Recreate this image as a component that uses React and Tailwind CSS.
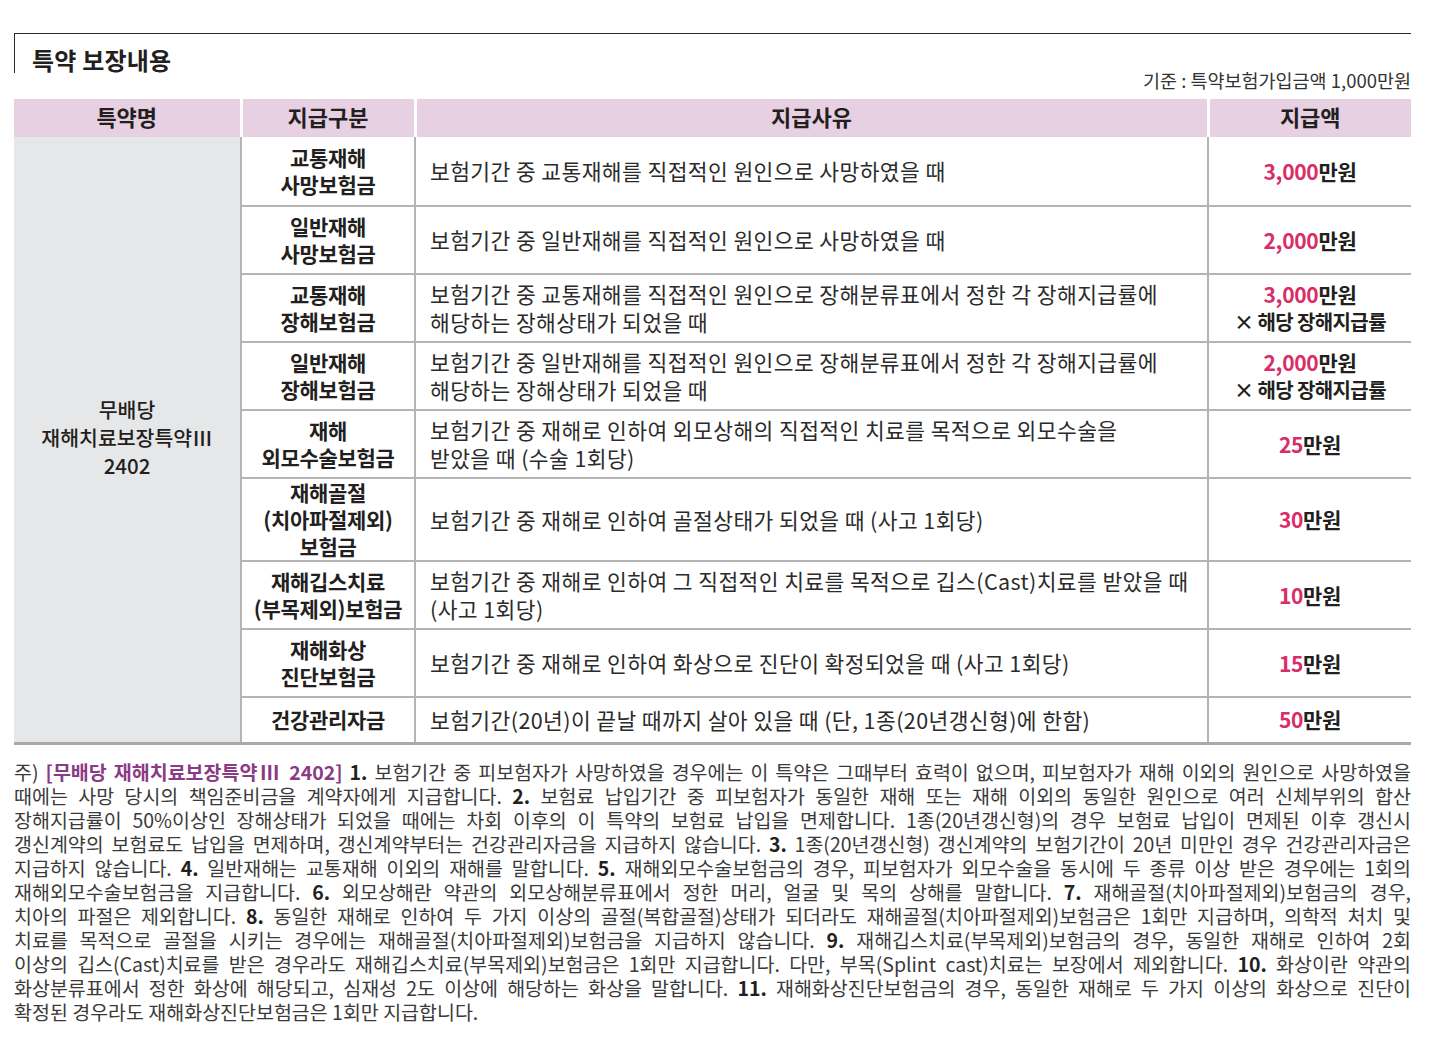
import React from 'react';

const rows = [
  { name: ['교통재해', '사망보험금'], reason: ['보험기간 중 교통재해를 직접적인 원인으로 사망하였을 때'], amt: '3,000', rate: false, h: 'h-[69px]' },
  { name: ['일반재해', '사망보험금'], reason: ['보험기간 중 일반재해를 직접적인 원인으로 사망하였을 때'], amt: '2,000', rate: false, h: 'h-[68px]' },
  { name: ['교통재해', '장해보험금'], reason: ['보험기간 중 교통재해를 직접적인 원인으로 장해분류표에서 정한 각 장해지급률에', '해당하는 장해상태가 되었을 때'], amt: '3,000', rate: true, h: 'h-[68px]' },
  { name: ['일반재해', '장해보험금'], reason: ['보험기간 중 일반재해를 직접적인 원인으로 장해분류표에서 정한 각 장해지급률에', '해당하는 장해상태가 되었을 때'], amt: '2,000', rate: true, h: 'h-[68px]' },
  { name: ['재해', '외모수술보험금'], reason: ['보험기간 중 재해로 인하여 외모상해의 직접적인 치료를 목적으로 외모수술을', '받았을 때 (수술 1회당)'], amt: '25', rate: false, h: 'h-[68px]' },
  { name: ['재해골절', '(치아파절제외)', '보험금'], reason: ['보험기간 중 재해로 인하여 골절상태가 되었을 때 (사고 1회당)'], amt: '30', rate: false, h: 'h-[83px]' },
  { name: ['재해깁스치료', '(부목제외)보험금'], reason: ['보험기간 중 재해로 인하여 그 직접적인 치료를 목적으로 깁스(Cast)치료를 받았을 때', '(사고 1회당)'], amt: '10', rate: false, h: 'h-[68px]' },
  { name: ['재해화상', '진단보험금'], reason: ['보험기간 중 재해로 인하여 화상으로 진단이 확정되었을 때 (사고 1회당)'], amt: '15', rate: false, h: 'h-[68px]' },
  { name: ['건강관리자금'], reason: ['보험기간(20년)이 끝날 때까지 살아 있을 때 (단, 1종(20년갱신형)에 한함)'], amt: '50', rate: false, h: 'h-[46px]' },
];

// 각주: 줄바꿈 위치를 원본에 맞춰 한 줄씩 양쪽정렬
const notes = [
  [['p', '[무배당 재해치료보장특약Ⅲ 2402]'], ' ', ['b', '1.'], ' 보험기간 중 피보험자가 사망하였을 경우에는 이 특약은 그때부터 효력이 없으며, 피보험자가 재해 이외의 원인으로 사망하였을'],
  ['때에는 사망 당시의 책임준비금을 계약자에게 지급합니다. ', ['b', '2.'], ' 보험료 납입기간 중 피보험자가 동일한 재해 또는 재해 이외의 동일한 원인으로 여러 신체부위의 합산'],
  ['장해지급률이 50%이상인 장해상태가 되었을 때에는 차회 이후의 이 특약의 보험료 납입을 면제합니다. 1종(20년갱신형)의 경우 보험료 납입이 면제된 이후 갱신시'],
  ['갱신계약의 보험료도 납입을 면제하며, 갱신계약부터는 건강관리자금을 지급하지 않습니다. ', ['b', '3.'], ' 1종(20년갱신형) 갱신계약의 보험기간이 20년 미만인 경우 건강관리자금은'],
  ['지급하지 않습니다. ', ['b', '4.'], ' 일반재해는 교통재해 이외의 재해를 말합니다. ', ['b', '5.'], ' 재해외모수술보험금의 경우, 피보험자가 외모수술을 동시에 두 종류 이상 받은 경우에는 1회의'],
  ['재해외모수술보험금을 지급합니다. ', ['b', '6.'], ' 외모상해란 약관의 외모상해분류표에서 정한 머리, 얼굴 및 목의 상해를 말합니다. ', ['b', '7.'], ' 재해골절(치아파절제외)보험금의 경우,'],
  ['치아의 파절은 제외합니다. ', ['b', '8.'], ' 동일한 재해로 인하여 두 가지 이상의 골절(복합골절)상태가 되더라도 재해골절(치아파절제외)보험금은 1회만 지급하며, 의학적 처치 및'],
  ['치료를 목적으로 골절을 시키는 경우에는 재해골절(치아파절제외)보험금을 지급하지 않습니다. ', ['b', '9.'], ' 재해깁스치료(부목제외)보험금의 경우, 동일한 재해로 인하여 2회'],
  ['이상의 깁스(Cast)치료를 받은 경우라도 재해깁스치료(부목제외)보험금은 1회만 지급합니다. 다만, 부목(Splint cast)치료는 보장에서 제외합니다. ', ['b', '10.'], ' 화상이란 약관의'],
  ['화상분류표에서 정한 화상에 해당되고, 심재성 2도 이상에 해당하는 화상을 말합니다. ', ['b', '11.'], ' 재해화상진단보험금의 경우, 동일한 재해로 두 가지 이상의 화상으로 진단이'],
  ['확정된 경우라도 재해화상진단보험금은 1회만 지급합니다.'],
];

function Seg({ s }) {
  if (typeof s === 'string') return s;
  if (s[0] === 'b') return <span className="font-bold text-[#231f20]">{s[1]}</span>;
  return <span className="font-bold text-[#8b3a86]">{s[1]}</span>;
}

export default function App() {
  const last = rows.length - 1;
  return (
    <div className="bg-white min-h-[1040px] pt-[33px] text-[#231f20]" style={{ fontFamily: '"Noto Sans CJK KR", "Noto Sans", sans-serif' }}>
      <div className="ml-[14px] w-[1397px]">
        {/* 제목 */}
        <div className="h-[40px] border-t-[1.5px] border-l-[1.5px] border-[#2a2a2a] pl-[17px] flex items-end">
          <h1 className="text-[24px] font-bold leading-none tracking-[0.2px] mb-[1px]">특약 보장내용</h1>
        </div>
        <div className="h-[26px] flex items-end justify-end pb-[10px]">
          <span className="text-[18.5px] leading-none text-[#333]">기준 : 특약보험가입금액 1,000만원</span>
        </div>

        {/* 표 */}
        <table className="w-full table-fixed border-collapse">
          <colgroup>
            <col className="w-[227px]" />
            <col className="w-[174px]" />
            <col className="w-[793px]" />
            <col />
          </colgroup>
          <thead>
            <tr className="h-[38px] bg-[#e8d0e3] text-[22px] font-bold">
              <th className="border-r-[3px] border-white font-bold pb-[3px]">특약명</th>
              <th className="border-r-[3px] border-white font-bold pb-[3px]">지급구분</th>
              <th className="border-r-[3px] border-white font-bold pb-[3px]">지급사유</th>
              <th className="font-bold pb-[3px]">지급액</th>
            </tr>
          </thead>
          <tbody>
            {rows.map((r, i) => (
              <tr key={i} className={r.h}>
                {i === 0 && (
                  <td rowSpan={rows.length} className="bg-[#e6e7e8] border-b-[3px] border-[#a9a9a9] text-center text-[20.5px] font-medium leading-[28px] pb-[4px]">
                    무배당<br />재해치료보장특약Ⅲ<br />2402
                  </td>
                )}
                <td className={`border-l-2 border-[#b4b4b4] text-center text-[21px] font-bold leading-[27px] tracking-[-0.3px] ${i === last ? 'border-b-[3px] border-b-[#a9a9a9]' : 'border-b-2'}`}>
                  {r.name.map((n, k) => <div key={k}>{n}</div>)}
                </td>
                <td className={`border-l-2 border-[#b4b4b4] pl-[14px] text-[21.5px] leading-[28px] tracking-[0.4px] text-[#2b2b2b] ${i === last ? 'border-b-[3px] border-b-[#a9a9a9]' : 'border-b-2'}`}>
                  {r.reason.map((n, k) => <div key={k} className="whitespace-nowrap">{n}</div>)}
                </td>
                <td className={`border-l-2 border-[#b4b4b4] text-center font-bold leading-[27px] ${i === last ? 'border-b-[3px] border-b-[#a9a9a9]' : 'border-b-2'}`}>
                  <div className="text-[21px] tracking-[-0.3px]"><span className="text-[#d92d68]">{r.amt}</span>만원</div>
                  {r.rate && <div className="text-[20px] tracking-[-0.6px]">× 해당 장해지급률</div>}
                </td>
              </tr>
            ))}
          </tbody>
        </table>

        {/* 각주 */}
        <div className="mt-[15px] text-[19.5px] leading-[24px] text-[#3a3a3a]">
          {notes.map((line, i) => (
            <div key={i} className={i < notes.length - 1 ? 'text-justify [text-align-last:justify]' : ''}>
              {i === 0 && '주) '}
              {line.map((s, k) => <Seg key={k} s={s} />)}
            </div>
          ))}
        </div>
      </div>
    </div>
  );
}
